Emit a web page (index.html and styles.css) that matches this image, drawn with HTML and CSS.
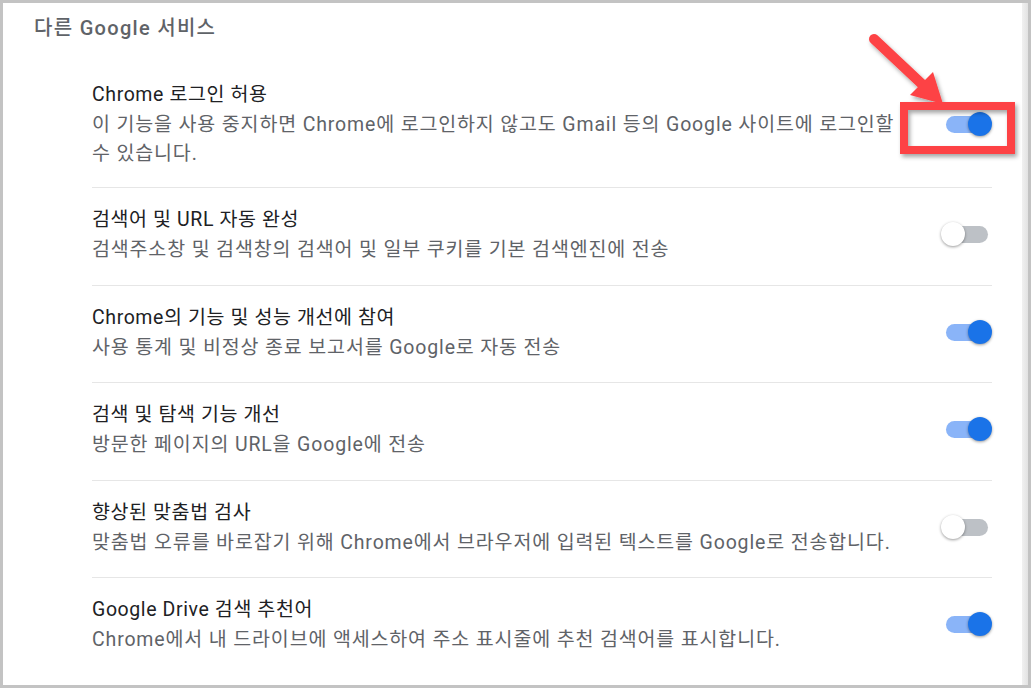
FILE: index.html
```html
<!DOCTYPE html>
<html lang="ko">
<head>
<meta charset="utf-8">
<link rel="stylesheet" href="styles.css">
</head>
<body>
<div class="frame">
  <div class="page">
    <h2 class="section-title">다른 Google 서비스</h2>
    <div class="rows">
      <div class="row">
        <div class="text">
          <div class="title">Chrome 로그인 허용</div>
          <div class="desc">이 기능을 사용 중지하면 Chrome에 로그인하지 않고도 Gmail 등의 Google 사이트에 로그인할 수 있습니다.</div>
        </div>
        <span class="toggle on"></span>
      </div>
      <div class="row">
        <div class="text">
          <div class="title">검색어 및 URL 자동 완성</div>
          <div class="desc">검색주소창 및 검색창의 검색어 및 일부 쿠키를 기본 검색엔진에 전송</div>
        </div>
        <span class="toggle"></span>
      </div>
      <div class="row">
        <div class="text">
          <div class="title">Chrome의 기능 및 성능 개선에 참여</div>
          <div class="desc">사용 통계 및 비정상 종료 보고서를 Google로 자동 전송</div>
        </div>
        <span class="toggle on"></span>
      </div>
      <div class="row">
        <div class="text">
          <div class="title">검색 및 탐색 기능 개선</div>
          <div class="desc">방문한 페이지의 URL을 Google에 전송</div>
        </div>
        <span class="toggle on"></span>
      </div>
      <div class="row">
        <div class="text">
          <div class="title">향상된 맞춤법 검사</div>
          <div class="desc">맞춤법 오류를 바로잡기 위해 Chrome에서 브라우저에 입력된 텍스트를 Google로 전송합니다.</div>
        </div>
        <span class="toggle"></span>
      </div>
      <div class="row">
        <div class="text">
          <div class="title">Google Drive 검색 추천어</div>
          <div class="desc">Chrome에서 내 드라이브에 액세스하여 주소 표시줄에 추천 검색어를 표시합니다.</div>
        </div>
        <span class="toggle on"></span>
      </div>
    </div>
  </div>
  <div class="scrollstrip"></div>
  <svg class="annotation" width="1031" height="688" viewBox="0 0 1031 688">
    <defs>
      <filter id="sh" x="-20%" y="-20%" width="140%" height="140%">
        <feDropShadow dx="2" dy="3" stdDeviation="2" flood-color="#000" flood-opacity="0.35"/>
      </filter>
    </defs>
    <g filter="url(#sh)">
      <line x1="874" y1="39" x2="924" y2="86" stroke="#fd4244" stroke-width="10" stroke-linecap="round"/>
      <polygon points="943,104 910,95 933,72" fill="#fd4244"/>
      <rect x="904" y="106" width="107" height="44" fill="none" stroke="#fd4244" stroke-width="8"/>
    </g>
  </svg>
</div>
</body>
</html>
```

FILE: styles.css
```css
* { box-sizing: border-box; }
html, body { margin: 0; padding: 0; background: #ffffff; }
.frame {
  position: relative;
  width: 1031px;
  height: 688px;
  border: 3px solid #c3c3c3;
  display: flex;
  overflow: hidden;
  font-family: Roboto, "Noto Sans CJK KR", sans-serif;
}
.page {
  flex: 1;
  background: #ffffff;
  padding: 10px 0 0 31px;
}
.scrollstrip {
  width: 6px;
  background: linear-gradient(to right, #f1f1f1, #e2e2e2);
}
.section-title {
  margin: 0;
  font-size: 20px;
  line-height: 30px;
  font-weight: 500;
  letter-spacing: 1.3px;
  color: #5f6368;
}
.rows {
  margin: 20px 0 0 58px;
  width: 900px;
}
.row {
  display: flex;
  align-items: center;
  justify-content: space-between;
  padding: 17px 0 20.5px;
  border-top: 1px solid #e6e6e6;
}
.row:first-child { border-top: none; padding-bottom: 19px; }
.text { width: 812px; }
.title {
  font-size: 19.5px;
  line-height: 30px;
  letter-spacing: 0.6px;
  color: #202124;
}
.desc {
  font-size: 19.5px;
  line-height: 29px;
  letter-spacing: 0.85px;
  color: #5f6368;
}
.toggle {
  position: relative;
  width: 42px;
  height: 17px;
  border-radius: 9px;
  background: #bdc1c6;
  margin-right: 4px;
  flex: none;
}
.toggle::after {
  content: "";
  position: absolute;
  top: -4px;
  left: -5px;
  width: 24px;
  height: 24px;
  border-radius: 50%;
  background: #ffffff;
  box-shadow: 0 1px 3px rgba(0,0,0,0.4);
}
.toggle.on { background: #8ab4f8; }
.toggle.on::after { left: 22px; background: #1a73e8; }
.annotation {
  position: absolute;
  left: -3px;
  top: -3px;
  pointer-events: none;
}
```
